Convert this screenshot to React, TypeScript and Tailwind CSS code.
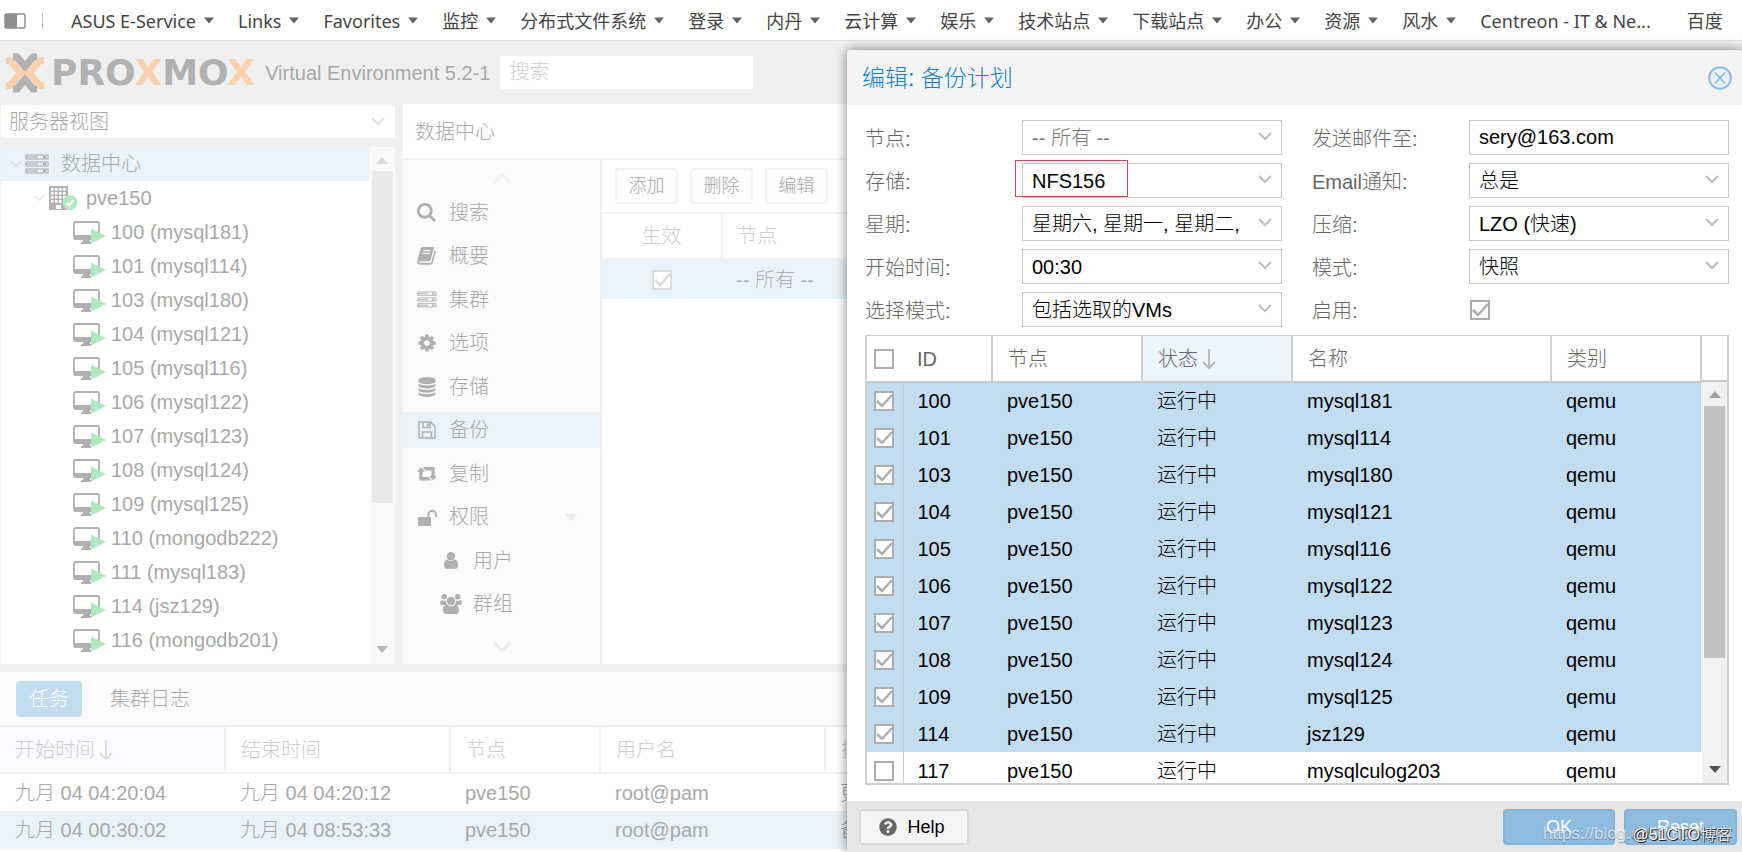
import React, { useState } from "react";
import { clsx } from "clsx";
import { FaQuestionCircle } from "react-icons/fa";

const bookmarks = [
  "ASUS E-Service",
  "Links",
  "Favorites",
  "监控",
  "分布式文件系统",
  "登录",
  "内丹",
  "云计算",
  "娱乐",
  "技术站点",
  "下载站点",
  "办公",
  "资源",
  "风水",
];

const vms = [
  "100 (mysql181)",
  "101 (mysql114)",
  "103 (mysql180)",
  "104 (mysql121)",
  "105 (mysql116)",
  "106 (mysql122)",
  "107 (mysql123)",
  "108 (mysql124)",
  "109 (mysql125)",
  "110 (mongodb222)",
  "111 (mysql183)",
  "114 (jsz129)",
  "116 (mongodb201)",
];

const tasks = [
  { start: "九月 04 04:20:04", end: "九月 04 04:20:12", desc: "更新软件包数据库" },
  { start: "九月 04 00:30:02", end: "九月 04 08:53:33", desc: "备份" },
];

const guests = [
  { id: "100", name: "mysql181" },
  { id: "101", name: "mysql114" },
  { id: "103", name: "mysql180" },
  { id: "104", name: "mysql121" },
  { id: "105", name: "mysql116" },
  { id: "106", name: "mysql122" },
  { id: "107", name: "mysql123" },
  { id: "108", name: "mysql124" },
  { id: "109", name: "mysql125" },
  { id: "114", name: "jsz129" },
  { id: "117", name: "mysqlculog203" },
];

/* ---------- icons ---------- */

function Chevron({ className }: { className?: string }) {
  return (
    <svg viewBox="0 0 14 9" className={className} fill="none" stroke="currentColor" strokeWidth="2">
      <path d="M1 1l6 6 6-6" />
    </svg>
  );
}

function ServerIcon({ className }: { className?: string }) {
  return (
    <svg viewBox="0 0 24 20" className={className} fill="none" stroke="currentColor" strokeWidth="1.100">
      {[1, 8, 15].map((y) => (
        <g key={y}>
          <path d={`M1 ${y}h22v4H1zM1 ${y + 2}h12`} />
          <path d={`M18 ${y + 2}h3`} strokeWidth="2.200" />
        </g>
      ))}
    </svg>
  );
}

function NodeIcon() {
  return (
    <svg viewBox="0 0 29 25" className="h-[25px] w-[29px] shrink-0">
      <path d="M0 0h19v24H0z" fill="#b3b3b3" />
      {[3, 7, 11, 15].map((y) =>
        [3, 7, 11, 15].map((x) => <path key={`${x}-${y}`} d={`M${x - 1} ${y - 1}h2.6v2.6h-2.6z`} fill="#fff" />)
      )}
      <path d="M7 19h5v4H7z" fill="#fff" />
      <circle cx="21" cy="16.500" r="7.500" fill="#b2e8bd" />
      <path d="M17.500 17l2.500 2.500 4.500-5.500" fill="none" stroke="#fff" strokeWidth="2.200" />
    </svg>
  );
}

function VmIcon() {
  return (
    <svg viewBox="0 0 33 24" className="h-6 w-[33px] shrink-0">
      <rect x="1" y="2" width="25" height="17" rx="1.500" fill="#fff" stroke="#b0b0b0" strokeWidth="1.800" />
      <path d="M1 15h25v4H1zM10 19h7v4h-7zM8 22h10v2H8z" fill="#b0b0b0" />
      <path d="M18 8.500l15 7.500-15 7.500z" fill="#b2e8bd" />
    </svg>
  );
}

function SearchIcon() {
  return (
    <svg viewBox="0 0 1792 1792" className="h-5 w-5" fill="currentColor">
      <path d="M1152 704q0-185-131.500-316.500t-316.500-131.500-316.500 131.500-131.500 316.500 131.500 316.500 316.500 131.500 316.500-131.500 131.500-316.500zm512 832q0 52-38 90t-90 38q-54 0-90-38l-343-342q-179 124-399 124-143 0-273.500-55.500t-225-150-150-225-55.500-273.500 55.500-273.500 150-225 225-150 273.500-55.500 273.500 55.500 225 150 150 225 55.500 273.500q0 220-124 399l343 343q37 37 37 90z" />
    </svg>
  );
}

function BookIcon() {
  return (
    <svg viewBox="0 0 20 18" className="h-[18px] w-5" fill="currentColor">
      <path d="M5.500 0h10.500q1.200 0 .9 1.300L13.500 13q-.3 1.200-1.600 1.200H2.700q-1 .1-.7.9.3.7 1.400.7h9.800q.8 0 1.100-.9L17.500 3.500q1.700.3 1.200 1.900L15.600 16q-.6 1.800-2.300 1.800H3Q.9 17.800.3 16q-.4-1.200.1-2.800L3.700 1.400Q4.100 0 5.500 0z" />
      <path d="M6.600 3.700h7M5.800 6.400h7" stroke="#fbfbfb" strokeWidth="1.200" />
    </svg>
  );
}

function CogIcon() {
  return (
    <svg viewBox="0 0 1792 1792" className="h-5 w-5" fill="currentColor">
      <path d="M1152 896q0-106-75-181t-181-75-181 75-75 181 75 181 181 75 181-75 75-181zm512-109v222q0 12-8 23t-20 13l-185 28q-19 54-39 91 35 50 107 138 10 12 10 25t-9 23q-27 37-99 108t-94 71q-12 0-26-9l-138-108q-44 23-91 38-16 136-29 186-7 28-36 28h-222q-14 0-24.500-8.500t-11.500-21.500l-28-184q-49-16-90-37l-141 107q-10 9-25 9-14 0-25-11-126-114-165-168-7-10-7-23 0-12 8-23 15-21 51-66.500t54-70.500q-27-50-41-99l-183-27q-13-2-21-12.500t-8-23.500v-222q0-12 8-23t19-13l186-28q14-46 39-92-40-57-107-138-10-12-10-24 0-10 9-23 26-36 98.500-107.500t94.500-71.500q13 0 26 10l138 107q44-23 91-38 16-136 29-186 7-28 36-28h222q14 0 24.500 8.500t11.500 21.500l28 184q49 16 90 37l142-107q9-9 24-9 13 0 25 10 129 119 165 170 7 8 7 22 0 12-8 23-15 21-51 66.500t-54 70.500q26 50 41 98l183 28q13 2 21 12.500t8 23.500z" />
    </svg>
  );
}

function DatabaseIcon() {
  return (
    <svg viewBox="128 0 1536 1792" className="h-5 w-[18px]" fill="currentColor">
      <path d="M896 768q237 0 443-43t325-127v170q0 69-103 128t-280 93.500-385 34.500-385-34.500-280-93.500-103-128v-170q119 84 325 127t443 43zm0 768q237 0 443-43t325-127v170q0 69-103 128t-280 93.500-385 34.500-385-34.500-280-93.500-103-128v-170q119 84 325 127t443 43zm0-384q237 0 443-43t325-127v170q0 69-103 128t-280 93.500-385 34.500-385-34.500-280-93.500-103-128v-170q119 84 325 127t443 43zm0-1152q208 0 385 34.500t280 93.500 103 128v128q0 69-103 128t-280 93.500-385 34.500-385-34.500-280-93.500-103-128v-128q0-69 103-128t280-93.500 385-34.500z" />
    </svg>
  );
}

function FloppyIcon() {
  return (
    <svg viewBox="0 0 18 18" className="h-[18px] w-[18px]" fill="none" stroke="currentColor" strokeWidth="1.500">
      <path d="M1 1h11.500L17 5.500V17H1zM4.500 17v-6h9v6M5 1v5.500h7V1" />
      <path d="M9.800 2.500v2.800" strokeWidth="2" />
    </svg>
  );
}

function RetweetIcon() {
  return (
    <svg viewBox="0 0 20 14" className="h-[14px] w-5" fill="currentColor">
      <path d="M4 0l4 4.800H5.500v5.200h6.300l2.600 3.500H3.600q-1.300 0-1.300-1.300V4.800H0zM16 13.500l-4-4.800h2.500V3.500H8.200L5.600 0h10.800q1.300 0 1.300 1.300v7.400H20z" />
    </svg>
  );
}

function UnlockIcon() {
  return (
    <svg viewBox="0 0 19 17" className="h-[17px] w-[19px]">
      <rect y="8" width="13" height="9" rx="1" fill="currentColor" />
      <path d="M10.500 8V5.500a3.700 3.700 0 0 1 7.400 0V8" fill="none" stroke="currentColor" strokeWidth="2" />
    </svg>
  );
}

function UserIcon() {
  return (
    <svg viewBox="0 0 14 17" className="h-[17px] w-[14px]" fill="currentColor">
      <circle cx="7" cy="4.300" r="4.200" />
      <path d="M3 7.500q4 3 8 0 3 .8 3 5.800 0 3.500-2.500 3.500h-9Q0 16.800 0 13.300q0-5 3-5.800z" />
    </svg>
  );
}

function GroupIcon() {
  return (
    <svg viewBox="0 0 22 20" className="h-5 w-[22px]" fill="currentColor">
      <circle cx="4.300" cy="2.800" r="2.700" />
      <circle cx="17.700" cy="2.800" r="2.700" />
      <circle cx="11" cy="7" r="4.200" />
      <path d="M2 6q2.500 1.500 4 .5 0 3 1.200 4.500H2.200Q0 11 0 9q0-2.500 2-3zM20 6q-2.500 1.500-4 .5 0 3-1.200 4.500h5Q22 11 22 9q0-2.500-2-3z" />
      <path d="M6.500 10.500q4.500 3.500 9 0 3.500.8 3.500 5.500 0 4-2.800 4H5.800Q3 20 3 16q0-4.700 3.500-5.500z" />
    </svg>
  );
}

function SortArrow({ className }: { className?: string }) {
  return (
    <svg viewBox="0 0 14 20" className={clsx("h-5 w-[14px]", className)} fill="none" stroke="currentColor" strokeWidth="1.800">
      <path d="M7 0v19M1 13l6 6 6-6" />
    </svg>
  );
}

function Triangle({ up, className }: { up?: boolean; className?: string }) {
  return (
    <svg viewBox="0 0 12 7" className={clsx("h-[7px] w-3", className)} fill="currentColor">
      <path d={up ? "M6 0l6 7H0z" : "M0 0h12L6 7z"} />
    </svg>
  );
}

const menu = [
  { label: "搜索", icon: <SearchIcon /> },
  { label: "概要", icon: <BookIcon /> },
  { label: "集群", icon: <ServerIcon className="h-[17px] w-5" /> },
  { label: "选项", icon: <CogIcon /> },
  { label: "存储", icon: <DatabaseIcon /> },
  { label: "备份", icon: <FloppyIcon />, active: true },
  { label: "复制", icon: <RetweetIcon /> },
  { label: "权限", icon: <UnlockIcon />, expandable: true },
  { label: "用户", icon: <UserIcon />, child: true },
  { label: "群组", icon: <GroupIcon />, child: true },
];

/* ---------- form controls ---------- */

interface CheckProps {
  label?: string;
  id?: string;
  checked: boolean;
  onChange?: () => void;
  faded?: boolean;
}

function Check({ label, id, checked, onChange, faded }: CheckProps) {
  return (
    <span className={clsx("relative block h-5 w-5", faded ? "text-[#dcdcdc]" : "text-[#adadad]")}>
      <input
        type="checkbox"
        id={id}
        aria-label={label}
        checked={checked}
        onChange={onChange ?? (() => {})}
        className="peer block h-5 w-5 appearance-none border-2 border-current bg-white"
      />
      <svg
        viewBox="0 0 20 20"
        className="pointer-events-none absolute inset-0 hidden peer-checked:block"
        fill="none"
        stroke="currentColor"
        strokeWidth="2.500"
      >
        <path d="M3 10l5 5L18 4" />
      </svg>
    </span>
  );
}

interface SelectFieldProps {
  id: string;
  label: string;
  value: string;
  muted?: boolean;
  marked?: boolean;
}

function SelectField({ id, label, value, muted, marked }: SelectFieldProps) {
  return (
    <div className="flex items-center">
      <label htmlFor={id} className="w-[157px] pt-0.5 text-[#666]">
        {label}
      </label>
      <div className="relative flex-1">
        <select
          id={id}
          className={clsx(
            "block h-[35px] w-full appearance-none border border-[#c8c8c8] bg-white pl-[9px] outline-none",
            muted ? "text-[#777]" : "text-black"
          )}
        >
          <option>{value}</option>
        </select>
        <Chevron className="pointer-events-none absolute top-3 right-[10px] h-[9px] w-[14px] text-[#bdbdbd]" />
        {marked && <div className="pointer-events-none absolute -top-[3px] -left-[7px] h-[37px] w-[113px] border border-[#d04a52]" />}
      </div>
    </div>
  );
}

/* ---------- page parts ---------- */

function BookmarkBar() {
  return (
    <nav className="flex h-[41px] items-center border-b border-[#e2e2e2] bg-white pt-px font-['Noto_Sans','Noto_Sans_CJK_SC',sans-serif] text-lg font-normal whitespace-nowrap text-[#444]">
      <svg viewBox="0 0 22 16" className="ml-1 h-4 w-[22px] shrink-0">
        <rect x="1" y="1" width="20" height="14" rx="1.500" fill="#fff" stroke="#8f8f8f" strokeWidth="1.500" />
        <path d="M1 1h12v14H1z" fill="#8f8f8f" />
      </svg>
      <span className="mr-7 ml-4 h-4 w-px bg-[#c8c8c8]" />
      {bookmarks.map((b) => (
        <a key={b} href="#" className="mr-6 flex shrink-0 items-center gap-2">
          {b}
          <Triangle className="w-[10px] text-[#5f6368]" />
        </a>
      ))}
      <a href="#" className="mr-9">
        Centreon - IT &amp; Ne...
      </a>
      <a href="#">百度</a>
    </nav>
  );
}

function Logo() {
  return (
    <div className="flex items-center">
      <svg viewBox="0 0 44 40" className="h-10 w-11" fill="none" strokeWidth="7">
        <path d="M3 7.500h4L18 20 7 32.500H3M41 7.500h-4L26 20l11 12.500h4" stroke="#fbd0ab" />
        <path d="M10 4h4l8 9.500L30 4h4M10 36h4l8-9.500 8 9.500h4" stroke="#b2b2b2" />
      </svg>
      <span className="ml-1 font-['DejaVu_Sans',sans-serif] text-4xl leading-10 font-bold text-[#b2b2b2]">
        PRO<span className="text-[#fbd0ab]">X</span>MO<span className="text-[#fbd0ab]">X</span>
      </span>
    </div>
  );
}

function ResourceTree() {
  return (
    <aside className="flex w-[395px] shrink-0 flex-col pt-px pl-px">
      <div className="relative">
        <select
          aria-label="服务器视图"
          className="block h-[33px] w-full appearance-none bg-white pl-2 text-[#a8a8a8] outline-none"
        >
          <option>服务器视图</option>
        </select>
        <Chevron className="pointer-events-none absolute top-3 right-[10px] h-[9px] w-[14px] text-[#e2e2e2]" />
      </div>
      <div className="mt-[9px] flex flex-1 bg-white text-[#a8a8a8]">
        <ul className="flex-1 pb-[7px]">
          <li className="flex h-[34px] items-center bg-[#ebf3fa] pl-[9px]">
            <Chevron className="h-[8px] w-3 text-[#dde3e8]" />
            <ServerIcon className="ml-[3px] h-5 w-6" />
            <span className="ml-3">数据中心</span>
          </li>
          <li className="flex h-[34px] items-center pl-8">
            <Chevron className="h-[8px] w-3 text-[#ebebeb]" />
            <span className="ml-1 flex">
              <NodeIcon />
            </span>
            <span className="ml-2">pve150</span>
          </li>
          {vms.map((vm) => (
            <li key={vm} className="flex h-[34px] items-center pl-[72px]">
              <VmIcon />
              <span className="ml-[5px]">{vm}</span>
            </li>
          ))}
        </ul>
        <div className="flex w-[26px] flex-col items-center bg-[#fafafa]">
          <Triangle up className="mt-[10px] text-[#dadada]" />
          <div className="mt-[7px] h-[332px] w-[21px] bg-[#eaeaea]" />
          <Triangle className="mt-auto mb-[11px] text-[#b8b8b8]" />
        </div>
      </div>
    </aside>
  );
}

function SideMenu() {
  return (
    <nav className="flex w-[199px] shrink-0 flex-col border-r-2 border-[#f0f0f0] bg-[#fbfbfb] text-[#a8a8a8]">
      <Chevron className="mx-auto mt-3 mb-[11px] h-3 w-[22px] rotate-180 text-[#f3f3f3]" />
      <ul className="flex flex-1 flex-col justify-between">
        {menu.map((m) => (
          <li
            key={m.label}
            className={clsx("flex h-9 items-center", m.child && "pl-6", m.active && "bg-[#ebf3fa]")}
          >
            <span className="ml-[11px] flex w-[26px] justify-center text-[#b0b0b0]">{m.icon}</span>
            <span className="ml-[9px]">{m.label}</span>
            {m.expandable && <Triangle className="mr-[21px] ml-auto w-4 text-[#ececec]" />}
          </li>
        ))}
      </ul>
      <Chevron className="mx-auto mt-[19px] mb-[11px] h-3 w-[22px] text-[#ebebeb]" />
    </nav>
  );
}

function BackupPanel() {
  return (
    <section className="flex min-w-0 flex-1 flex-col bg-white">
      <h2 className="flex h-14 items-center border-b-2 border-[#f0f0f0] pt-px pl-3 text-[#a8a8a8]">数据中心</h2>
      <div className="flex flex-1">
        <SideMenu />
        <div className="min-w-0 flex-1">
          <div className="flex h-[54px] items-center gap-3 border-b-2 border-[#f3f3f3] pl-[13px] text-[#a8a8a8]">
            {["添加", "删除", "编辑"].map((b) => (
              <button
                key={b}
                type="button"
                className="h-9 w-[63px] rounded border-2 border-[#f3f3f3] bg-[#fcfcfc] text-lg"
              >
                {b}
              </button>
            ))}
          </div>
          <table className="w-full table-fixed text-left text-[#b0b0b0]">
            <thead>
              <tr className="h-[45px] border-b-2 border-[#f3f3f3] text-[#cdcdcd]">
                <th className="w-[120px] border-r-2 border-[#f3f3f3] text-center font-light">生效</th>
                <th className="pl-[14px] font-light">节点</th>
              </tr>
            </thead>
            <tbody>
              <tr className="h-10 bg-[#ebf3fa]">
                <td>
                  <div className="flex justify-center">
                    <Check label="生效" checked faded />
                  </div>
                </td>
                <td className="pl-[14px]">-- 所有 --</td>
              </tr>
            </tbody>
          </table>
        </div>
      </div>
    </section>
  );
}

function TaskPanel() {
  const head = "border-r-2 border-[#f0f0f0] pl-[15px] font-light";
  const cell = "pl-[15px]";
  return (
    <section className="mt-2 flex-1 bg-white">
      <div className="flex h-[55px] items-center border-b-2 border-[#f0f0f0] bg-[#fbfbfb] pl-4 text-[#a8a8a8]">
        <button type="button" className="h-9 w-[66px] rounded-sm bg-[#c2dcf0] text-white">
          任务
        </button>
        <button type="button" className="ml-7">
          集群日志
        </button>
      </div>
      <table className="w-full table-fixed text-left whitespace-nowrap text-[#a8a8a8]">
        <thead>
          <tr className="h-[46px] border-b-2 border-[#f0f0f0] text-[#cdcdcd]">
            <th className={clsx(head, "w-[225px] bg-[#f9fbfe]")}>
              <span className="flex items-center gap-1">
                开始时间
                <SortArrow className="text-[#dcdcdc]" />
              </span>
            </th>
            <th className={clsx(head, "w-[225px]")}>结束时间</th>
            <th className={clsx(head, "w-[150px]")}>节点</th>
            <th className={clsx(head, "w-[225px]")}>用户名</th>
            <th className="pl-[15px] font-light">描述</th>
          </tr>
        </thead>
        <tbody>
          {tasks.map((t, i) => (
            <tr key={t.start} className={clsx("h-[38px]", i === 1 && "bg-[#ebf3fa]")}>
              <td className={cell}>{t.start}</td>
              <td className={cell}>{t.end}</td>
              <td className={cell}>pve150</td>
              <td className={cell}>root@pam</td>
              <td className={cell}>{t.desc}</td>
            </tr>
          ))}
        </tbody>
      </table>
    </section>
  );
}

function GuestTable() {
  const [selected, setSelected] = useState(() => guests.filter((g) => g.id !== "117").map((g) => g.id));

  const toggle = (id: string) =>
    setSelected((prev) => (prev.includes(id) ? prev.filter((s) => s !== id) : [...prev, id]));

  const all = selected.length === guests.length;
  const head = "border-r-2 border-[#cfcfcf] font-light";

  return (
    <div className="mt-2 flex h-[450px] overflow-hidden border-2 border-t border-[#cfcfcf]">
      <div className="min-w-0 flex-1">
        <table className="w-full table-fixed text-left text-black">
          <thead>
            <tr className="h-[46px] border-b-2 border-[#c8c8c8] text-[#666]">
              <th className="w-9 pl-[7px]">
                <Check
                  label="全选"
                  checked={all}
                  onChange={() => setSelected(all ? [] : guests.map((g) => g.id))}
                />
              </th>
              <th className={clsx(head, "w-[89px] pl-[14px]")}>ID</th>
              <th className={clsx(head, "w-[150px] pl-[15px]")}>节点</th>
              <th className={clsx(head, "w-[150px] bg-[#edf4fc] pl-[15px]")}>
                <span className="flex items-center gap-1">
                  状态
                  <SortArrow className="text-[#b5b5b5]" />
                </span>
              </th>
              <th className={clsx(head, "pl-[15px]")}>名称</th>
              <th className={clsx(head, "w-[150px] pl-[15px]")}>类别</th>
            </tr>
          </thead>
          <tbody>
            {guests.map((g) => (
              <tr key={g.id} className={clsx("h-[37px]", selected.includes(g.id) && "bg-[#c2dcf0]")}>
                <td className="border-r border-[#c4ccd4] pl-[7px]">
                  <Check label={g.id} checked={selected.includes(g.id)} onChange={() => toggle(g.id)} />
                </td>
                <td className="pl-[14px]">{g.id}</td>
                <td className="pl-[15px]">pve150</td>
                <td className="pl-[15px]">运行中</td>
                <td className="pl-[15px]">{g.name}</td>
                <td className="pl-[15px]">qemu</td>
              </tr>
            ))}
          </tbody>
        </table>
      </div>
      <div className="flex w-[25px] flex-col items-center bg-[#f1f1f1]">
        <div className="h-[46px] w-full shrink-0 border-b-2 border-[#c8c8c8] bg-white" />
        <Triangle up className="mt-[9px] shrink-0 text-[#a3a3a3]" />
        <div className="mt-2 h-[252px] w-[21px] shrink-0 bg-[#c1c1c1]" />
        <Triangle className="mt-auto mb-[10px] shrink-0 text-[#505050]" />
      </div>
    </div>
  );
}

function BackupDialog() {
  const [email, setEmail] = useState("sery@163.com");
  const [enabled, setEnabled] = useState(true);

  return (
    <div
      role="dialog"
      aria-label="编辑: 备份计划"
      className="absolute top-[50px] right-0 bottom-0 flex w-[895px] flex-col rounded-t bg-white shadow-[0_0_12px_rgba(0,0,0,0.5)]"
    >
      <header className="flex h-[55px] items-center justify-between rounded-t bg-[#f4f4f4] pr-[10px] pl-[15px]">
        <h1 className="text-[23px] text-[#157fcc]">编辑: 备份计划</h1>
        <button type="button" aria-label="关闭">
          <svg viewBox="0 0 24 24" className="h-6 w-6" fill="none" stroke="#8fb8da" strokeWidth="2">
            <circle cx="12" cy="12" r="10.800" fill="#e6f1fa" />
            <path d="M7 6.500l10 11M17 6.500l-10 11" strokeWidth="1.600" />
          </svg>
        </button>
      </header>

      <form className="flex-1 pt-[15px] pr-[13px] pl-[18px]" onSubmit={(e) => e.preventDefault()}>
        <div className="grid grid-cols-[417px_417px] justify-between gap-y-2">
          <SelectField id="node" label="节点:" value="-- 所有 --" muted />
          <div className="flex items-center">
            <label htmlFor="email" className="w-[157px] pt-0.5 text-[#666]">
              发送邮件至:
            </label>
            <input
              id="email"
              value={email}
              onChange={(e) => setEmail(e.target.value)}
              className="h-[35px] w-0 flex-1 border border-[#c8c8c8] bg-white pl-[9px] text-black outline-none"
            />
          </div>
          <SelectField id="storage" label="存储:" value="NFS156" marked />
          <SelectField id="notify" label="Email通知:" value="总是" />
          <SelectField id="dow" label="星期:" value="星期六, 星期一, 星期二," />
          <SelectField id="compress" label="压缩:" value="LZO (快速)" />
          <SelectField id="start" label="开始时间:" value="00:30" />
          <SelectField id="mode" label="模式:" value="快照" />
          <SelectField id="selmode" label="选择模式:" value="包括选取的VMs" />
          <div className="flex items-center">
            <label htmlFor="enable" className="w-[158px] pt-0.5 text-[#666]">
              启用:
            </label>
            <Check id="enable" checked={enabled} onChange={() => setEnabled(!enabled)} />
          </div>
        </div>
        <GuestTable />
      </form>

      <footer className="relative flex h-[51px] items-center bg-[#e6e6e6] pt-px pr-[5px] pl-3">
        <button
          type="button"
          className="flex h-9 w-[110px] items-center justify-center gap-[10px] rounded-sm border-2 border-[#dadada] bg-[#f5f5f5] pr-1 text-lg text-black"
        >
          <FaQuestionCircle className="text-[#666]" />
          Help
        </button>
        <button type="button" className="ml-auto h-9 w-28 rounded border-2 border-[#83b4da] bg-[#8fbcdf] text-lg text-white">
          OK
        </button>
        <button type="button" className="ml-[9px] h-9 w-[113px] rounded border-2 border-[#83b4da] bg-[#8fbcdf] text-lg text-white">
          Reset
        </button>
        <span className="pointer-events-none absolute right-[10px] bottom-[8px] text-[17px] leading-5 text-white/70 [text-shadow:0_1px_1px_rgba(0,0,0,0.3)]">
          https://blog.csdn.net/sery
        </span>
        <span className="pointer-events-none absolute right-[10px] bottom-[7px] text-base leading-5 text-white [text-shadow:1px_1px_0_#222,-1px_0_0_#555]">
          @51CTO博客
        </span>
      </footer>
    </div>
  );
}

export default function App() {
  return (
    <div className="relative flex min-h-screen flex-col overflow-hidden bg-[#f0f0f0] font-['Liberation_Sans','Noto_Sans_CJK_SC',sans-serif] text-[20px] leading-7 font-light">
      <BookmarkBar />
      <header className="flex h-[63px] items-center pl-[3px] text-[#a8a8a8]">
        <Logo />
        <span className="ml-[10px]">Virtual Environment 5.2-1</span>
        <input
          aria-label="搜索"
          placeholder="搜索"
          className="ml-[10px] h-[33px] w-[253px] bg-white pl-[9px] outline-none placeholder:text-[#cfcfcf]"
        />
      </header>
      <div className="flex gap-2">
        <ResourceTree />
        <BackupPanel />
      </div>
      <TaskPanel />
      <BackupDialog />
    </div>
  );
}
